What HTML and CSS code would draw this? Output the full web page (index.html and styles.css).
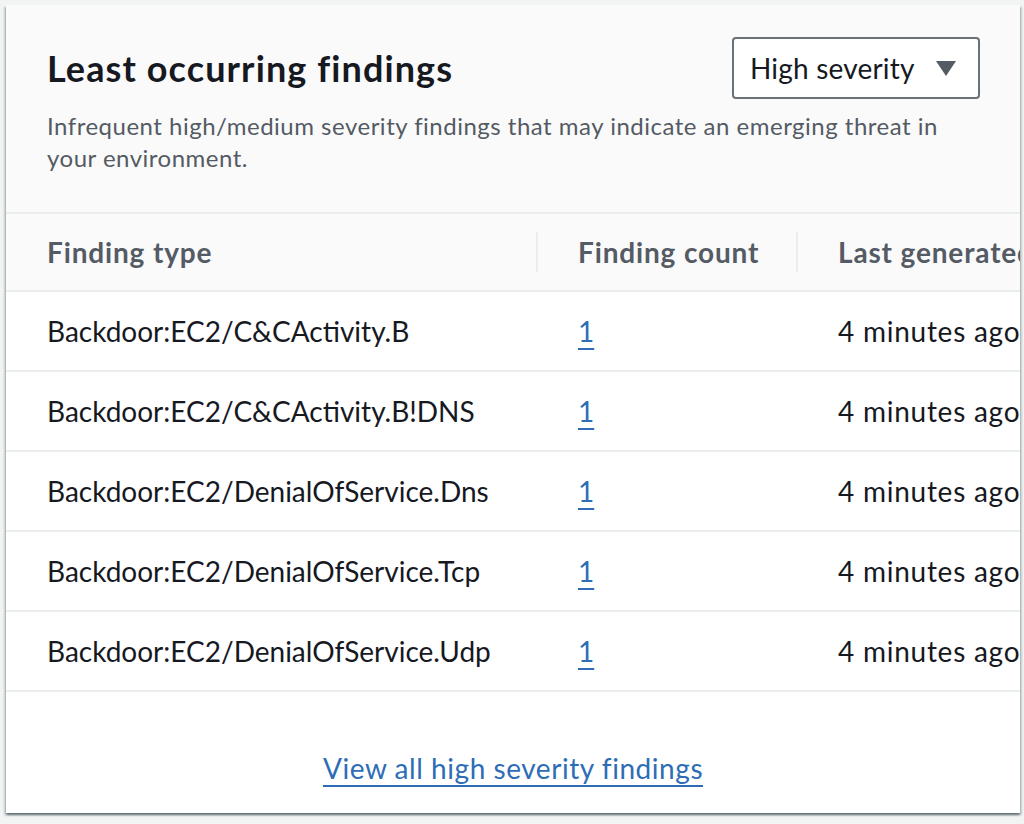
FILE: index.html
```html
<!DOCTYPE html>
<html lang="en">
<head>
<meta charset="utf-8">
<title>Least occurring findings</title>
<link rel="stylesheet" href="styles.css">
</head>
<body>
<div class="page">
  <section class="card">
    <header class="card-header">
      <div class="header-top">
        <h2 class="title">Least occurring findings</h2>
        <div class="select">
          <span class="select-label">High severity</span>
          <svg class="caret" width="20" height="15" viewBox="0 0 20 15"><polygon points="0,0 20,0 10,15" fill="#545b64"/></svg>
        </div>
      </div>
      <p class="description">Infrequent high/medium severity findings that may indicate an emerging threat in your environment.</p>
    </header>
    <div class="table-wrap">
      <table class="table">
        <colgroup>
          <col class="c1"><col class="c2"><col class="c3">
        </colgroup>
        <thead>
          <tr>
            <th><span class="th-inner">Finding type</span></th>
            <th class="divided"><span class="th-inner">Finding count</span></th>
            <th class="divided"><span class="th-inner">Last generated</span></th>
          </tr>
        </thead>
        <tbody>
          <tr><td>Backdoor:EC2/C&amp;CActivity.B</td><td><a href="#" class="link">1</a></td><td class="time">4 minutes ago</td></tr>
          <tr><td>Backdoor:EC2/C&amp;CActivity.B!DNS</td><td><a href="#" class="link">1</a></td><td class="time">4 minutes ago</td></tr>
          <tr><td>Backdoor:EC2/DenialOfService.Dns</td><td><a href="#" class="link">1</a></td><td class="time">4 minutes ago</td></tr>
          <tr><td>Backdoor:EC2/DenialOfService.Tcp</td><td><a href="#" class="link">1</a></td><td class="time">4 minutes ago</td></tr>
          <tr><td>Backdoor:EC2/DenialOfService.Udp</td><td><a href="#" class="link">1</a></td><td class="time">4 minutes ago</td></tr>
        </tbody>
      </table>
    </div>
    <footer class="card-footer">
      <a href="#" class="link footer-link">View all high severity findings</a>
    </footer>
  </section>
</div>
</body>
</html>
```
FILE: styles.css
```css
html, body {
  margin: 0;
  padding: 0;
  background: #f2f3f3;
  font-family: Lato, "Open Sans", "Liberation Sans", sans-serif;
  color: #16191f;
}

.page {
  padding: 5px 4px 10px 6px;
}

.card {
  background: #ffffff;
  height: 808px;
  overflow: hidden;
  box-shadow: 0 2px 2px 0 rgba(0, 28, 36, 0.45), 2px 2px 2px 0 rgba(0, 28, 36, 0.15), -2px 2px 2px 0 rgba(0, 28, 36, 0.15);
  display: flex;
  flex-direction: column;
}

.card-header {
  background: #fafafa;
  padding: 32px 40px 38px 41px;
  border-bottom: 2px solid #eaeded;
}

.header-top {
  display: flex;
  align-items: center;
  justify-content: space-between;
}

.title {
  margin: 0;
  font-size: 36px;
  line-height: 44px;
  font-weight: 700;
  letter-spacing: 1.1px;
  color: #16191f;
}

.select {
  box-sizing: border-box;
  width: 248px;
  height: 62px;
  border: 2px solid #687078;
  border-radius: 4px;
  background: #ffffff;
  display: flex;
  align-items: center;
  justify-content: space-between;
  padding: 0 22px 0 16px;
}

.select-label {
  font-size: 28px;
  letter-spacing: 0.2px;
  color: #16191f;
}

.caret {
  display: block;
}

.description {
  margin: 11px 0 0;
  font-size: 24px;
  line-height: 32px;
  letter-spacing: 0.5px;
  color: #545b64;
  max-width: 920px;
}

.table-wrap {
  overflow: hidden;
}

.table {
  border-collapse: collapse;
  table-layout: fixed;
  width: 1100px;
}

.c1 { width: 530px; }
.c2 { width: 260px; }
.c3 { width: 310px; }

.table th {
  background: #fafafa;
  height: 76px;
  padding: 0;
  text-align: left;
  font-size: 28px;
  font-weight: 700;
  letter-spacing: 0.85px;
  color: #545b64;
  border-bottom: 2px solid #eaeded;
  white-space: nowrap;
}

.th-inner {
  display: block;
  padding: 0 0 0 41px;
  line-height: 40px;
}

.table th.divided .th-inner {
  border-left: 2px solid #eaeded;
  padding-left: 40px;
}

.table td {
  height: 78px;
  padding: 0 0 0 41px;
  font-size: 28px;
  line-height: 40px;
  color: #16191f;
  border-bottom: 2px solid #eaeded;
  white-space: nowrap;
}

.table td + td {
  padding-left: 42px;
}

.table td.time {
  letter-spacing: 0.75px;
}

.link {
  color: #2e6db6;
  text-decoration: underline;
  text-decoration-thickness: 2px;
  text-underline-offset: 6px;
}

.card-footer {
  padding: 56px 40px 24px;
  text-align: center;
}

.footer-link {
  font-size: 28px;
  line-height: 40px;
  letter-spacing: 0.55px;
}
```
